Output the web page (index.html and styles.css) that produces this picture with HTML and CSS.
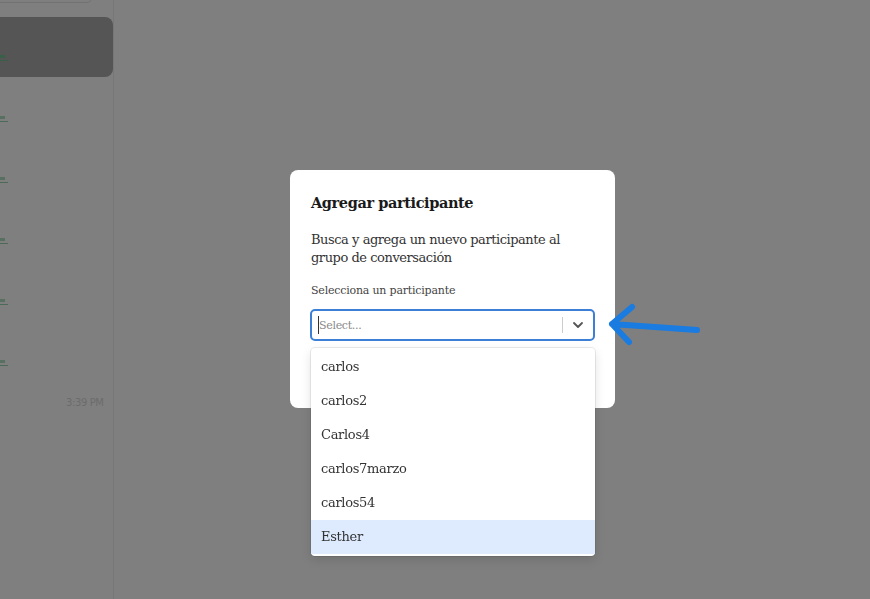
FILE: index.html
```html
<!DOCTYPE html>
<html lang="es">
<head>
<meta charset="utf-8">
<title>Chat</title>
<link rel="stylesheet" href="styles.css">
</head>
<body>
<div class="app">
  <aside class="sidebar">
    <div class="search"></div>
    <ul class="chats">
      <li class="chat active"><span class="frag"><i></i><i></i></span></li>
      <li class="chat"><span class="frag"><i></i><i></i></span></li>
      <li class="chat"><span class="frag"><i></i><i></i></span></li>
      <li class="chat"><span class="frag"><i></i><i></i></span></li>
      <li class="chat"><span class="frag"><i></i><i></i></span></li>
      <li class="chat"><span class="frag"><i></i><i></i></span></li>
      <li class="chat"><span class="time">3:39 PM</span></li>
    </ul>
  </aside>
  <main class="main"></main>
</div>

<div class="overlay">
  <div class="modal">
    <h2 class="modal-title">Agregar participante</h2>
    <p class="modal-desc">Busca y agrega un nuevo participante al grupo de conversación</p>
    <label class="field-label">Selecciona un participante</label>
    <div class="select">
      <div class="control">
        <div class="value"><span class="caret"></span><span class="placeholder">Select...</span></div>
        <span class="sep"></span>
        <span class="indicator">
          <svg width="14" height="14" viewBox="0 0 14 14"><path d="M3 5 L7 9 L11 5" fill="none" stroke="#555" stroke-width="1.8" stroke-linecap="round" stroke-linejoin="round"/></svg>
        </span>
      </div>
      <ul class="menu">
        <li class="option">carlos</li>
        <li class="option">carlos2</li>
        <li class="option">Carlos4</li>
        <li class="option">carlos7marzo</li>
        <li class="option">carlos54</li>
        <li class="option focused">Esther</li>
      </ul>
    </div>
    <div class="modal-footer"></div>
  </div>
  <svg class="pointer" width="110" height="60" viewBox="0 0 110 60">
    <path d="M10 24 L95 30 M10 24 L30 7 M10 24 L27 42" fill="none" stroke="#1a7be0" stroke-width="6" stroke-linecap="round" stroke-linejoin="round"/>
  </svg>
</div>
</body>
</html>
```

FILE: styles.css
```css
* { box-sizing: border-box; }
html, body { margin: 0; padding: 0; height: 100%; }
body {
  font-family: "DejaVu Serif", "Liberation Serif", serif;
  background: #ffffff;
  overflow: hidden;
}
.app {
  display: flex;
  height: 100%;
}
.sidebar {
  width: 114px;
  flex: none;
  border-right: 1px solid #eeeeee;
  overflow: hidden;
}
.search {
  height: 30px;
  margin-top: -27px;
  margin-left: -20px;
  width: 114px;
  border: 1px solid #e4e4e4;
  border-radius: 8px;
}
.chats {
  list-style: none;
  margin: 14px 0 0 -20px;
  padding: 0;
}
.chat {
  height: 60px;
  margin-bottom: 1px;
  width: 133px;
  display: flex;
  align-items: flex-end;
  padding-bottom: 14px;
  padding-left: 19px;
  border-radius: 8px;
}
.chat.active { background: #aaaaaa; }
.frag {
  display: flex;
  flex-direction: column;
  gap: 2px;
  margin-bottom: 2px;
}
.frag i {
  display: block;
  width: 6px;
  height: 3px;
  background: #b0e0c4;
}
.frag i + i { width: 9px; height: 1px; background: #98d4b0; }
.chat.active .frag i { background: #70c090; }
.time {
  font-family: "DejaVu Sans", sans-serif;
  font-size: 10px;
  color: #d8d8d8;
  margin-left: 67px;
  margin-bottom: 21px;
  letter-spacing: -0.4px;
}
.main { flex: 1; }

.overlay {
  position: fixed;
  inset: 0;
  background: rgba(0, 0, 0, 0.5);
  display: flex;
  align-items: flex-start;
  padding: 170px 0 0 290px;
}
.modal {
  width: 325px;
  height: 238px;
  background: #ffffff;
  border-radius: 8px;
  padding: 21px 20px 0 21px;
  color: #1a1a1a;
}
.modal-title {
  margin: 0;
  font-size: 14.5px;
  line-height: 24px;
  font-weight: bold;
  letter-spacing: -0.4px;
}
.modal-desc {
  margin: 16px 0 0;
  font-size: 13px;
  line-height: 18px;
  color: #333;
  letter-spacing: -0.45px;
}
.field-label {
  display: block;
  margin-top: 16px;
  font-size: 11px;
  line-height: 16px;
  color: #444;
  letter-spacing: -0.2px;
}
.select {
  position: relative;
  margin-top: 10px;
  margin-left: -1px;
}
.control {
  height: 32px;
  width: 285px;
  border: 2px solid #3b7fd6;
  border-radius: 5px;
  display: flex;
  align-items: center;
  background: #fff;
}
.value {
  flex: 1;
  display: flex;
  align-items: center;
  padding-left: 6px;
}
.caret {
  width: 1px;
  height: 18px;
  background: #333;
}
.placeholder {
  font-size: 11px;
  color: #8a8a8a;
  letter-spacing: -0.3px;
}
.sep {
  width: 1px;
  height: 16px;
  background: #cccccc;
}
.indicator {
  width: 30px;
  display: flex;
  justify-content: center;
  align-items: center;
}
.menu {
  position: absolute;
  top: 39px;
  left: 1px;
  width: 284px;
  list-style: none;
  margin: 0;
  padding: 2px 0;
  background: #fff;
  border-radius: 4px;
  box-shadow: 0 0 0 1px rgba(0,0,0,0.08), 0 4px 11px rgba(0,0,0,0.12);
}
.option {
  height: 34px;
  line-height: 34px;
  padding-left: 10px;
  font-size: 13px;
  color: #333;
  letter-spacing: -0.3px;
}
.option.focused { background: #deebff; }
.pointer {
  position: absolute;
  left: 602px;
  top: 300px;
}
```
